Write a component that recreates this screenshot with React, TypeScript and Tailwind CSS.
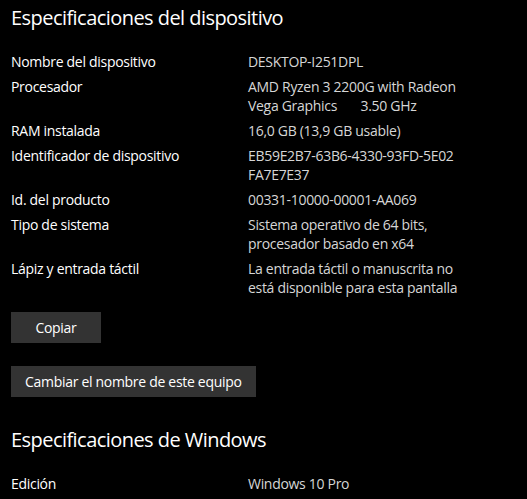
const rows: { label: string; value: string[] }[] = [
  { label: "Nombre del dispositivo", value: ["DESKTOP-I251DPL"] },
  { label: "Procesador", value: ["AMD Ryzen 3 2200G with Radeon", "Vega Graphics\u00a0\u00a0\u00a0\u00a0\u00a0\u00a0\u00a03.50 GHz"] },
  { label: "RAM instalada", value: ["16,0 GB (13,9 GB usable)"] },
  { label: "Identificador de dispositivo", value: ["EB59E2B7-63B6-4330-93FD-5E02", "FA7E7E37"] },
  { label: "Id. del producto", value: ["00331-10000-00001-AA069"] },
  { label: "Tipo de sistema", value: ["Sistema operativo de 64 bits,", "procesador basado en x64"] },
  { label: "Lápiz y entrada táctil", value: ["La entrada táctil o manuscrita no", "está disponible para esta pantalla"] },
];

function Row({ label, value }: { label: string; value: string[] }) {
  return (
    <div className="flex">
      <div className="w-[237px] shrink-0 text-white">{label}</div>
      <div className="text-[#d6d6d6]">
        {value.map((line) => (
          <div key={line}>{line}</div>
        ))}
      </div>
    </div>
  );
}

export default function App() {
  return (
    <div
      className="min-h-[499px] w-[527px] overflow-hidden bg-black pl-[11px] pt-[2px] text-[14px] leading-[19px] tracking-[-0.3px] text-white"
      style={{ fontFamily: '"Open Sans", "Noto Sans", sans-serif' }}
    >
      <h1 className="text-[20px] leading-[32px] tracking-[-0.55px] text-white">Especificaciones del dispositivo</h1>

      <div className="mt-[18px] flex flex-col gap-[6px]">
        {rows.map((r) => (
          <Row key={r.label} label={r.label} value={r.value} />
        ))}
      </div>

      <button className="mt-[15px] h-[31px] w-[90px] bg-[#333333] text-white">Copiar</button>

      <div>
        <button className="mt-[23px] h-[31px] bg-[#333333] px-[14px] text-white">
          Cambiar el nombre de este equipo
        </button>
      </div>

      <h2 className="mt-[27px] text-[20px] leading-[32px] tracking-[-0.55px] text-white">Especificaciones de Windows</h2>

      <div className="mt-[18px]">
        <Row label="Edición" value={["Windows 10 Pro"]} />
      </div>
    </div>
  );
}
